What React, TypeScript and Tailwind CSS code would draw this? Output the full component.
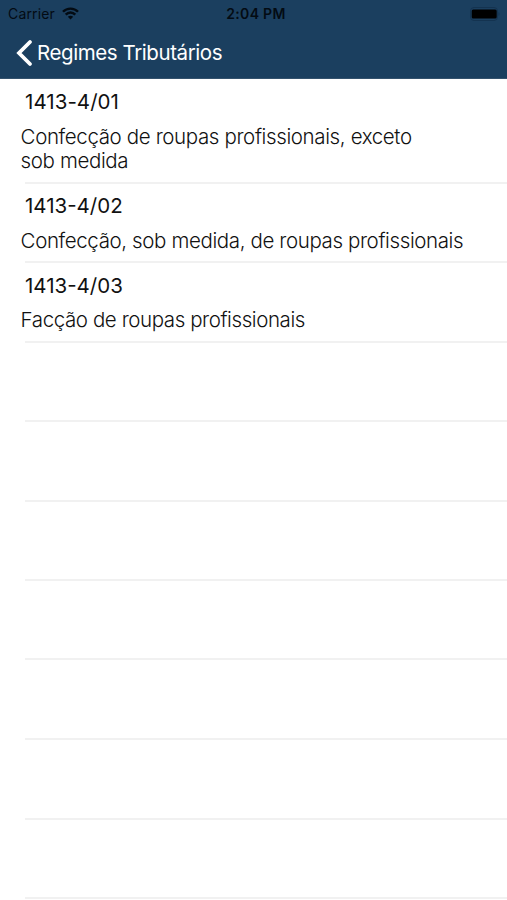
type Entry = { code: string; text: string; row: string; codeStyle: string; textStyle: string };

const entries: Entry[] = [
  { code: "1413-4/01", text: "Confecção de roupas profissionais, exceto sob medida", row: "h-[105px]", codeStyle: "mt-[11px] tracking-[0.05px]", textStyle: "mt-[11px] w-[420px] tracking-[-0.37px]" },
  { code: "1413-4/02", text: "Confecção, sob medida, de roupas profissionais", row: "h-[79px]", codeStyle: "mt-[10px]", textStyle: "mt-[11px] w-[470px] tracking-[-0.38px]" },
  { code: "1413-4/03", text: "Facção de roupas profissionais", row: "h-[80px]", codeStyle: "mt-[11px]", textStyle: "mt-[10px] w-[470px] tracking-[-0.41px]" },
];

const emptyRows = ["h-[79px]", "h-[80px]", "h-[79px]", "h-[79px]", "h-[80px]", "h-[80px]", "h-[79px]"];

function Divider() {
  return <div className="ml-[25px] mt-auto h-[2px] shrink-0 bg-[#f1f1f1]" />;
}

function StatusBar() {
  return (
    <div className="grid h-[27px] grid-cols-[1fr_auto_1fr] items-center pl-2 pr-[7px] text-sm text-[#030b13]">
      <div className="flex items-center gap-[7px]">
        <span className="tracking-[0.15px]">Carrier</span>
        <svg width="17" height="13" viewBox="0 0 17 13" fill="none" stroke="currentColor" strokeWidth="2.4">
          <path d="M1 4.8C5 .5 12 .5 16 4.8M3.7 7.7C6.5 4.8 10.5 4.8 13.3 7.7" />
          <path d="M5.8 9.8Q8.5 7.7 11.2 9.8L8.5 12.6Z" fill="currentColor" stroke="none" />
        </svg>
      </div>
      <span className="ml-1 font-semibold tracking-[0.3px]">2:04 PM</span>
      <svg className="justify-self-end" width="30" height="14" viewBox="0 0 30 14">
        <rect x=".5" y=".5" width="27" height="13" rx="3.5" fill="none" stroke="#143350" />
        <rect x="1.7" y="2.5" width="25" height="9" rx="1.5" fill="#000" />
        <path d="M28.5 5Q30.5 7 28.5 9Z" fill="#143350" />
      </svg>
    </div>
  );
}

export default function App() {
  return (
    <main className="h-[900px] w-[507px] overflow-hidden bg-white font-['Inter',sans-serif] text-[#111]">
      <header className="h-[79px] border-b border-[#34526d] bg-[#1b3f5f]">
        <StatusBar />
        <div className="flex h-[51px] items-center gap-1 pl-4 text-white">
          <svg width="17" height="28" viewBox="0 0 17 28" fill="none" stroke="currentColor" strokeWidth="3.8" strokeLinecap="round">
            <path d="M14 3L3 14L14 25" />
          </svg>
          <h1 className="text-[20.5px] leading-6 tracking-[-0.42px]">Regimes Tributários</h1>
        </div>
      </header>
      <ul>
        {entries.map((entry) => (
          <li key={entry.code} className={`${entry.row} flex flex-col`}>
            <h2 className={`${entry.codeStyle} ml-[25px] w-fit text-[20.5px] leading-6`}>{entry.code}</h2>
            <p className={`${entry.textStyle} ml-[20.6px] text-[20.5px] font-light leading-6`}>{entry.text}</p>
            <Divider />
          </li>
        ))}
        {emptyRows.map((row, index) => (
          <li key={index} className={`${row} flex flex-col`}>
            <Divider />
          </li>
        ))}
      </ul>
    </main>
  );
}
